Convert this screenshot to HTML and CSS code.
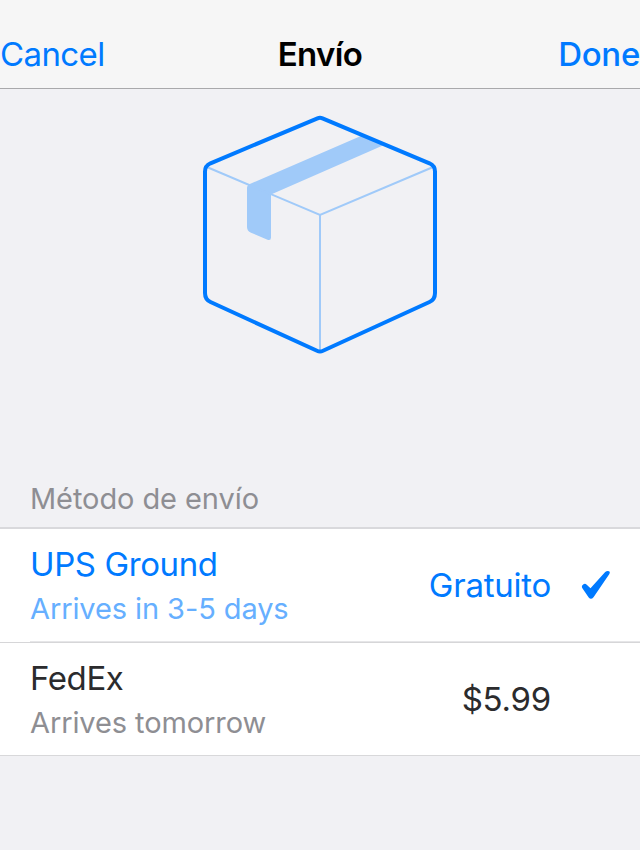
FILE: index.html
```html
<!DOCTYPE html>
<html lang="es">
<head>
<meta charset="utf-8">
<title>Envío</title>
<link rel="stylesheet" href="styles.css">
</head>
<body>
<header class="navbar">
  <a class="nav-action cancel">Cancel</a>
  <h1 class="nav-title">Envío</h1>
  <a class="nav-action done">Done</a>
</header>
<main>
  <div class="hero">
    <svg class="package" width="240" height="246" viewBox="200 112 240 246" fill="none">
      <path d="M251 183.5 362 135.5 384 145 271 194.5V237.5Q271 241 267.5 239.8L251 232.7Q247 231 247 227V188Q247 185 251 183.5Z" fill="#a0caf9"/>
      <path d="M208 167.5 320 215 432 167.5M320 215V350" stroke="#a0caf9" stroke-width="2"/>
      <path d="M317.5 118.3Q320 117.2 322.5 118.3L429.5 163.3Q435 165.8 435 171.5V293Q435 299.5 429.5 302L323 350.8Q320 352.2 317 350.8L210.5 302Q205 299.5 205 293V171.5Q205 165.8 210.5 163.3Z" stroke="#007aff" stroke-width="4"/>
    </svg>
  </div>
  <h2 class="section-title">Método de envío</h2>
  <ul class="methods">
    <li class="method selected">
      <div class="details">
        <span class="name">UPS Ground</span>
        <span class="arrival">Arrives in 3-5 days</span>
      </div>
      <span class="price">Gratuito</span>
      <svg class="check" width="30" height="30" viewBox="0 0 30 30">
        <path d="M2.2 15.5Q4.5 12.5 7 15L10.5 18.3 25.2 2.1Q27 .4 29 1.2 30.5 2 29.2 4.2L13.5 27.2Q11 30.2 8.7 27.5L2.4 18.3Q1.5 16.7 2.2 15.5Z" fill="#007aff"/>
      </svg>
    </li>
    <li class="method">
      <div class="details">
        <span class="name">FedEx</span>
        <span class="arrival">Arrives tomorrow</span>
      </div>
      <span class="price">$5.99</span>
      <span class="check"></span>
    </li>
  </ul>
</main>
</body>
</html>
```
FILE: styles.css
```css
* {
  box-sizing: border-box;
}

body {
  margin: 0;
  min-height: 850px;
  background: #f1f1f4;
  font-family: Inter, "Liberation Sans", sans-serif;
  color: #2b2b2d;
}

.navbar {
  display: grid;
  grid-template-columns: 1fr auto 1fr;
  height: 89px;
  padding-top: 34px;
  background: #f6f6f6;
  border-bottom: 1px solid #a9a9ab;
  font-size: 33px;
  line-height: 40px;
}

.nav-action {
  color: #007aff;
  letter-spacing: -0.6px;
  white-space: nowrap;
}

.done {
  justify-self: end;
  font-weight: 500;
  letter-spacing: -0.3px;
}

.nav-title {
  margin: 0;
  font-size: 33px;
  font-weight: 600;
  letter-spacing: -0.6px;
  color: #000;
}

.hero {
  display: flex;
  justify-content: center;
  height: 390px;
  padding-top: 23px;
}

.section-title {
  height: 48px;
  margin: 0;
  padding-left: 30px;
  font-size: 29px;
  font-weight: 400;
  letter-spacing: -0.08px;
  line-height: 40px;
  color: #8e8e93;
}

.methods {
  margin: 0;
  padding: 0;
  list-style: none;
  background: #fff;
  border-top: 2px solid #d9d9dc;
  border-bottom: 1px solid #d8d8da;
}

.method {
  display: flex;
  align-items: flex-start;
  height: 112px;
  padding: 0 30px;
}

.selected {
  height: 114px;
  border-bottom: 1px solid #d6d6d8;
  background: linear-gradient(#e6e6e8, #e6e6e8) 30px 100% / 100% 1px no-repeat;
}

.details {
  display: flex;
  flex: 1;
  flex-direction: column;
  padding-top: 13px;
}

.name {
  font-size: 33px;
  letter-spacing: -0.4px;
  line-height: 44px;
}

.arrival {
  font-size: 29px;
  letter-spacing: -0.1px;
  line-height: 46px;
  color: #8e8e93;
}

.price {
  padding-top: 34px;
  font-size: 33px;
  letter-spacing: -0.25px;
  line-height: 44px;
}

.check {
  flex: none;
  width: 30px;
  margin: 41px 0 0 29px;
}

.selected .name,
.selected .price {
  color: #007aff;
}

.selected .arrival {
  color: #66afff;
}
```
